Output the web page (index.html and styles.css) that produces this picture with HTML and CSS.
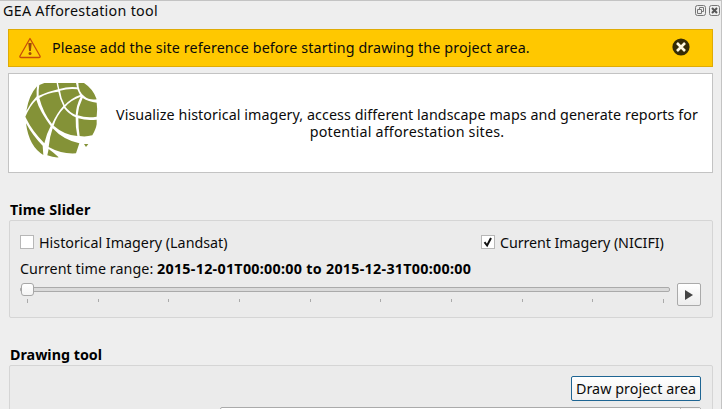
FILE: index.html
```html
<!DOCTYPE html>
<html lang="en">
<head>
<meta charset="utf-8">
<title>GEA Afforestation tool</title>
<link rel="stylesheet" href="styles.css">
</head>
<body>
<main class="dock">
  <header class="titlebar">
    <span class="title">GEA Afforestation tool</span>
    <svg class="window-icons" width="26" height="11" viewBox="0 0 26 11" fill="none" stroke="#777">
      <rect x=".5" y=".5" width="10" height="10" rx="2"/>
      <path d="M4.5 4V2.5h4v4H7M2.5 4.5h4v4h-4z"/>
      <rect x="14.5" y=".5" width="10" height="10" rx="2"/>
      <path d="M17 3l5 5M22 3l-5 5" stroke="#555" stroke-width="2"/>
    </svg>
  </header>
  <section class="message">
    <svg class="warning" width="24" height="22" viewBox="0 0 24 22">
      <path d="M12 1.5 L22 19 Q22.5 20.5 21 20.5 H3 Q1.500 20.5 2 19 Z" fill="#ffce08" stroke="#c84e09" stroke-width="1.300" stroke-linejoin="round"/>
      <path d="M10.300 6h3.400l-.8 8h-1.800z" fill="#9b4b08"/><circle cx="12" cy="16.500" r="1.500" fill="#9b4b08"/>
    </svg>
    <span class="message-text">Please add the site reference before starting drawing the project area.</span>
    <svg class="close" width="18" height="18" viewBox="0 0 18 18">
      <circle cx="9" cy="9" r="8.600" fill="#352b05"/>
      <path d="M5 5l8 8M13 5l-8 8" stroke="#fff8df" stroke-width="2.600"/>
    </svg>
  </section>
  <section class="intro">
    <svg class="globe" width="75" height="77" viewBox="27 21 225 231" fill="#849237">
      <path d="M66 34Q64 50 65 64Q48 82 34 108Q42 60 66 34Z"/>
      <path d="M73 30L88 24H125Q126 34 129 43Q100 50 71 62Q70 45 73 30Z"/>
      <path d="M129 24H183L186 37Q160 34 133 42Z"/>
      <path d="M190 24H207Q235 42 245 73Q222 76 208 64Q190 50 190 24Z"/>
      <path d="M64 74Q70 95 80 112Q95 138 107 153Q95 175 88 205Q50 165 36 135L31 125Q45 92 64 74Z"/>
      <path d="M73 69Q98 52 130 50Q134 72 145 93Q125 115 111 147Q85 115 73 69Z"/>
      <path d="M135 47Q160 40 187 43Q191 52 195 60Q168 70 149 90Q138 70 135 47Z"/>
      <path d="M151 95Q168 75 197 65Q184 90 182 120Q164 112 151 95Z"/>
      <path d="M203 69Q220 80 245 83Q248 100 245 125Q215 130 188 121Q190 95 203 69Z"/>
      <path d="M147 99Q162 118 182 127Q181 155 187 183Q148 180 116 152Q125 122 147 99Z"/>
      <path d="M190 130Q215 138 245 134V148Q243 162 232 181Q212 186 194 183Q190 160 190 130Z"/>
      <path d="M113 160Q145 195 193 205L183 235Q140 238 101 216Q104 185 113 160Z"/>
      <path d="M33 145Q55 185 83 212L85 240Q42 215 33 145Z"/>
      <path d="M101 222Q115 232 131 247Q115 248 97 241Z"/>
      <path d="M207 207h13l-7 9z"/>
    </svg>
    <p class="intro-text"><span class="intro-a">Visualize historical imagery, access different landscape maps and generate reports for</span><br><span class="intro-b">potential afforestation sites.</span></p>
  </section>
  <h2 class="heading time-heading"><span>Time Slider</span></h2>
  <section class="group time-group">
    <div class="checks">
      <label class="check"><span class="box"></span><span class="historical">Historical Imagery (Landsat)</span></label>
      <label class="check current"><span class="box"><svg width="12" height="12" viewBox="0 0 12 12"><path d="M2.500 6.200l2.600 3.300L9 2" fill="none" stroke="#111" stroke-width="2"/></svg></span><span class="nicfi">Current Imagery (NICIFI)</span></label>
    </div>
    <div class="range"><span class="range-label">Current time range:</span><b class="range-value">2015-12-01T00:00:00 to 2015-12-31T00:00:00</b></div>
    <div class="slider-row">
      <div class="slider">
        <div class="track"><span class="handle"></span></div>
        <div class="ticks"><i></i><i></i><i></i><i></i><i></i><i></i><i></i><i></i><i></i><i></i></div>
      </div>
      <button class="play"><svg width="10" height="12" viewBox="0 0 10 12"><path d="M1 1l8 5-8 5z" fill="#444"/></svg></button>
    </div>
  </section>
  <h2 class="heading draw-heading"><span>Drawing tool</span></h2>
  <section class="group draw-group">
    <button class="draw"><span>Draw project area</span></button>
    <div class="combo"><span></span></div>
  </section>
</main>
</body>
</html>
```
FILE: styles.css
```css
* { box-sizing: border-box; }
body { margin: 0; background: #eee; color: #0b0b0b; font: 14.3px/17px "Noto Sans", sans-serif; }
.dock { width: 722px; height: 409px; overflow: hidden; padding: 0 8px; border-top: 1px solid #c3c3c3; border-right: 1px solid #c3c3c3; white-space: nowrap; }
.titlebar { display: flex; justify-content: space-between; height: 28px; margin: 0 -8px 0 -5px; padding-top: 1px; }
.title { letter-spacing: .28px; }
.window-icons { margin: 3px 0 0; }
.message { display: flex; align-items: center; height: 38px; background: #ffc800; border: 1px solid #dfab05; padding: 0 22px 0 9px; }
.message-text { margin: -2px 0 0 10px; letter-spacing: .11px; }
.close { margin-left: auto; margin-top: -2px; }
.message, .intro { width: 705px; }
.intro { display: flex; height: 100px; margin-top: 6px; padding: 8px 14px 0 15px; background: #fff; border: 1px solid #c3c3c3; }
.globe { flex: none; }
.intro-text { flex: 1; margin: 24px 0 0 17px; text-align: center; }
.intro-a { letter-spacing: .065px; }
.intro-b { letter-spacing: .2px; }
.heading { margin: 0; padding-left: 2px; font-size: 14.3px; line-height: 17px; color: #000; }
.time-heading { margin-top: 28px; letter-spacing: .12px; }
.group { background: #ebebeb; border: 1px solid #d5d5d5; border-radius: 2px; width: 704px; margin-left: 1px; }
.time-group { height: 98px; margin-top: 2px; padding: 13px 11px 0 10px; }
.checks { display: flex; height: 17px; }
.check { display: flex; }
.current { margin-left: auto; width: 221px; }
.nicfi { letter-spacing: -.08px; }
.box { width: 14px; height: 14px; margin: 1px 5px 0 0; background: #fff; border: 1px solid #b7b7b7; flex: none; }
.current .box { margin-left: 1px; }
.box svg { display: block; }
.range { display: flex; margin-top: 9px; gap: 3px; }
.range-label { width: 134px; letter-spacing: .05px; }
.range b { color: #000; letter-spacing: .28px; }
.slider-row { display: flex; justify-content: space-between; margin-top: 5px; }
.slider { width: 650px; }
.track { position: relative; height: 5px; margin-top: 5px; background: #dadada; border: 1px solid #aaa; border-radius: 2px; }
.handle { position: absolute; left: 0; top: -5px; width: 13px; height: 13px; background: linear-gradient(#fff, #f4f4f4); border: 1px solid #a7a7a7; border-radius: 3px; }
.ticks { display: flex; justify-content: space-between; padding: 0 6px 0 7px; margin-top: 7px; }
.ticks i { width: 1px; height: 3px; background: #aaa; }
.ticks i:first-child, .ticks i:last-child { height: 4px; }
.play { width: 24px; height: 23px; margin-top: 1px; padding: 0; border: 1px solid #aaa; border-radius: 2px; background: linear-gradient(#fff, #ededed); display: flex; align-items: center; justify-content: center; }
.draw-heading { margin-top: 28px; }
.draw-group { height: 80px; margin-top: 2px; padding: 10px 11px 0; display: flex; flex-direction: column; align-items: flex-end; }
.draw { width: 130px; height: 25px; padding: 0; border: 1px solid #1e6593; border-radius: 2px; background: linear-gradient(#fff, #f0f0f0); font: inherit; color: #0b0b0b; letter-spacing: .05px; }
.combo { width: 481px; height: 24px; margin-top: 6px; background: #fff; border: 1px solid #aaa; border-radius: 2px; display: flex; justify-content: flex-end; }
.combo span { width: 20px; border-left: 1px solid #bbb; background: #f5f5f5; }
```
